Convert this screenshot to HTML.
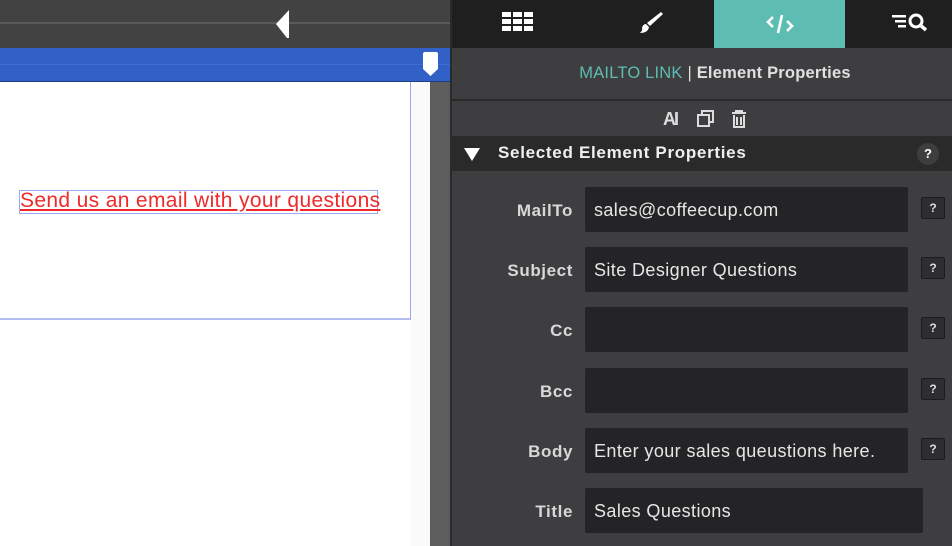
<!DOCTYPE html>
<html><head><meta charset="utf-8"><style>
*{margin:0;padding:0;box-sizing:border-box}
body{width:952px;height:546px;overflow:hidden;position:relative;font-family:"Liberation Sans",sans-serif;background:#3e3e40}
.a{position:absolute}
.lbl{position:absolute;right:379px;color:#d8d8d8;font-size:17px;font-weight:bold;text-align:right;letter-spacing:0.6px}
.inp{position:absolute;left:585px;width:323px;height:45px;background:#242426;border-radius:2px;color:#e6e6e6;font-size:18px;letter-spacing:0.4px;padding:13px 0 0 9px;white-space:nowrap}
.q{position:absolute;left:921px;width:24px;height:22px;border:1px solid #1c1c1c;background:#2e2e30;color:#ddd;font-size:12px;font-weight:bold;text-align:center;line-height:20px;border-radius:2px}
</style></head><body>
<div class="a" style="left:0;top:0;width:452px;height:48px;background:#424242"></div>
<div class="a" style="left:0;top:22px;width:452px;height:2px;background:#5a5a5a"></div>
<svg class="a" style="left:274px;top:10px" width="18" height="28"><path d="M15 0 L15 28 L13 28 L2 14 Z" fill="#fff"/></svg>
<div class="a" style="left:0;top:48px;width:452px;height:34px;background:#3161c6;border-bottom:1px solid #1f3d80"></div>
<div class="a" style="left:0;top:64px;width:452px;height:1px;background:#3f6ed0"></div>
<svg class="a" style="left:422px;top:52px" width="17" height="25"><path d="M1 2 Q1 0 3 0 L14 0 Q16 0 16 2 L16 17 L8.5 24 L1 17 Z" fill="#fff"/></svg>
<div class="a" style="left:0;top:82px;width:430px;height:464px;background:#fafafa"></div>
<div class="a" style="left:0;top:82px;width:411px;height:464px;background:#fefefe"></div>
<div class="a" style="left:0;top:82px;width:411px;height:238px;background:#fff;border-right:1px solid #9aa8f0;border-bottom:2px solid #b4bdf2"></div>
<div class="a" style="left:19px;top:190px;width:359px;height:24px;border:1px solid #9aa8f0"></div>
<div class="a" style="left:20px;top:189px;color:#ee2a2a;font-size:21px;letter-spacing:0.35px;text-decoration:underline;white-space:nowrap">Send us an email with your questions</div>
<div class="a" style="left:430px;top:82px;width:20px;height:464px;background:#5d5d5d"></div>
<div class="a" style="left:450px;top:0;width:2px;height:546px;background:#2a2a2a"></div>
<div class="a" style="left:452px;top:0;width:500px;height:48px;background:#1f1f20"></div>
<div class="a" style="left:714px;top:0;width:131px;height:48px;background:#5ebdb3"></div>
<svg class="a" style="left:502px;top:12px" width="32" height="22"><g fill="#fff"><rect x="0" y="0" width="9" height="5"/><rect x="11" y="0" width="9" height="5"/><rect x="22" y="0" width="9" height="5"/><rect x="0" y="7" width="9" height="5"/><rect x="11" y="7" width="9" height="5"/><rect x="22" y="7" width="9" height="5"/><rect x="0" y="14" width="9" height="5"/><rect x="11" y="14" width="9" height="5"/><rect x="22" y="14" width="9" height="5"/></g></svg>
<svg class="a" style="left:636px;top:11px" width="28" height="24"><path d="M25 1 L27 3 L14 15 L11 12 Z" fill="#fff"/><path d="M10 13 L13 16 Q12 22 4 22 Q7 19 6 17 Q7 13 10 13Z" fill="#fff"/></svg>
<svg class="a" style="left:766px;top:12px" width="28" height="24"><path d="M7 5 L2 10 L7 15 M21 9 L26 14 L21 19 M16 3 L12 21" stroke="#fff" stroke-width="2.6" fill="none"/></svg>
<svg class="a" style="left:892px;top:11px" width="40" height="22"><g fill="#fff"><rect x="0" y="4" width="14" height="2.5"/><rect x="3" y="9" width="11" height="2.5"/><rect x="6" y="14" width="8" height="2.5"/></g><circle cx="24" cy="10" r="6" stroke="#fff" stroke-width="3" fill="none"/><path d="M28 14 L34 19" stroke="#fff" stroke-width="3.5"/></svg>
<div class="a" style="left:452px;top:48px;width:500px;height:53px;background:#3e3e40;border-bottom:2px solid #2a2a2b"></div>
<div class="a" style="left:465px;top:64px;width:500px;text-align:center;font-size:16.5px;color:#e0e0e0;font-weight:bold;letter-spacing:0.2px"><span style="color:#5ebdb3;font-weight:normal">MAILTO LINK</span> <span style="font-weight:normal;color:#ddd">|</span> Element Properties</div>
<div class="a" style="left:663px;top:109px;color:#ddd;font-size:18px;font-weight:bold;letter-spacing:-2px">AI</div>
<svg class="a" style="left:697px;top:110px" width="18" height="18"><rect x="5" y="1" width="11" height="11" stroke="#ddd" stroke-width="2" fill="none"/><rect x="1" y="5" width="11" height="11" stroke="#ddd" stroke-width="2" fill="#3e3e40"/></svg>
<svg class="a" style="left:730px;top:110px" width="18" height="18"><path d="M2 3 H16 M6 3 V1 H12 V3 M4 5 V17 H14 V5 M7 7 V15 M11 7 V15" stroke="#ddd" stroke-width="2" fill="none"/></svg>
<div class="a" style="left:452px;top:136px;width:500px;height:35px;background:#2a2a2b"></div>
<svg class="a" style="left:464px;top:148px" width="16" height="13"><path d="M0 0 H16 L8 13 Z" fill="#fff"/></svg>
<div class="a" style="left:498px;top:143px;color:#f0f0f0;font-size:17px;font-weight:bold;letter-spacing:0.7px">Selected Element Properties</div>
<div class="a" style="left:917px;top:143px;width:22px;height:22px;border-radius:50%;background:#3e3e40;color:#fff;font-size:13px;font-weight:bold;text-align:center;line-height:22px">?</div>
<div class="lbl" style="top:201px">MailTo</div><div class="inp" style="top:187px">sales@coffeecup.com</div><div class="q" style="top:197px">?</div>
<div class="lbl" style="top:261px">Subject</div><div class="inp" style="top:247px">Site Designer Questions</div><div class="q" style="top:257px">?</div>
<div class="lbl" style="top:321px">Cc</div><div class="inp" style="top:307px"></div><div class="q" style="top:317px">?</div>
<div class="lbl" style="top:382px">Bcc</div><div class="inp" style="top:368px"></div><div class="q" style="top:378px">?</div>
<div class="lbl" style="top:442px">Body</div><div class="inp" style="top:428px">Enter your sales queustions here.</div><div class="q" style="top:438px">?</div>
<div class="lbl" style="top:502px">Title</div><div class="inp" style="top:488px;width:338px">Sales Questions</div>
</body></html>
